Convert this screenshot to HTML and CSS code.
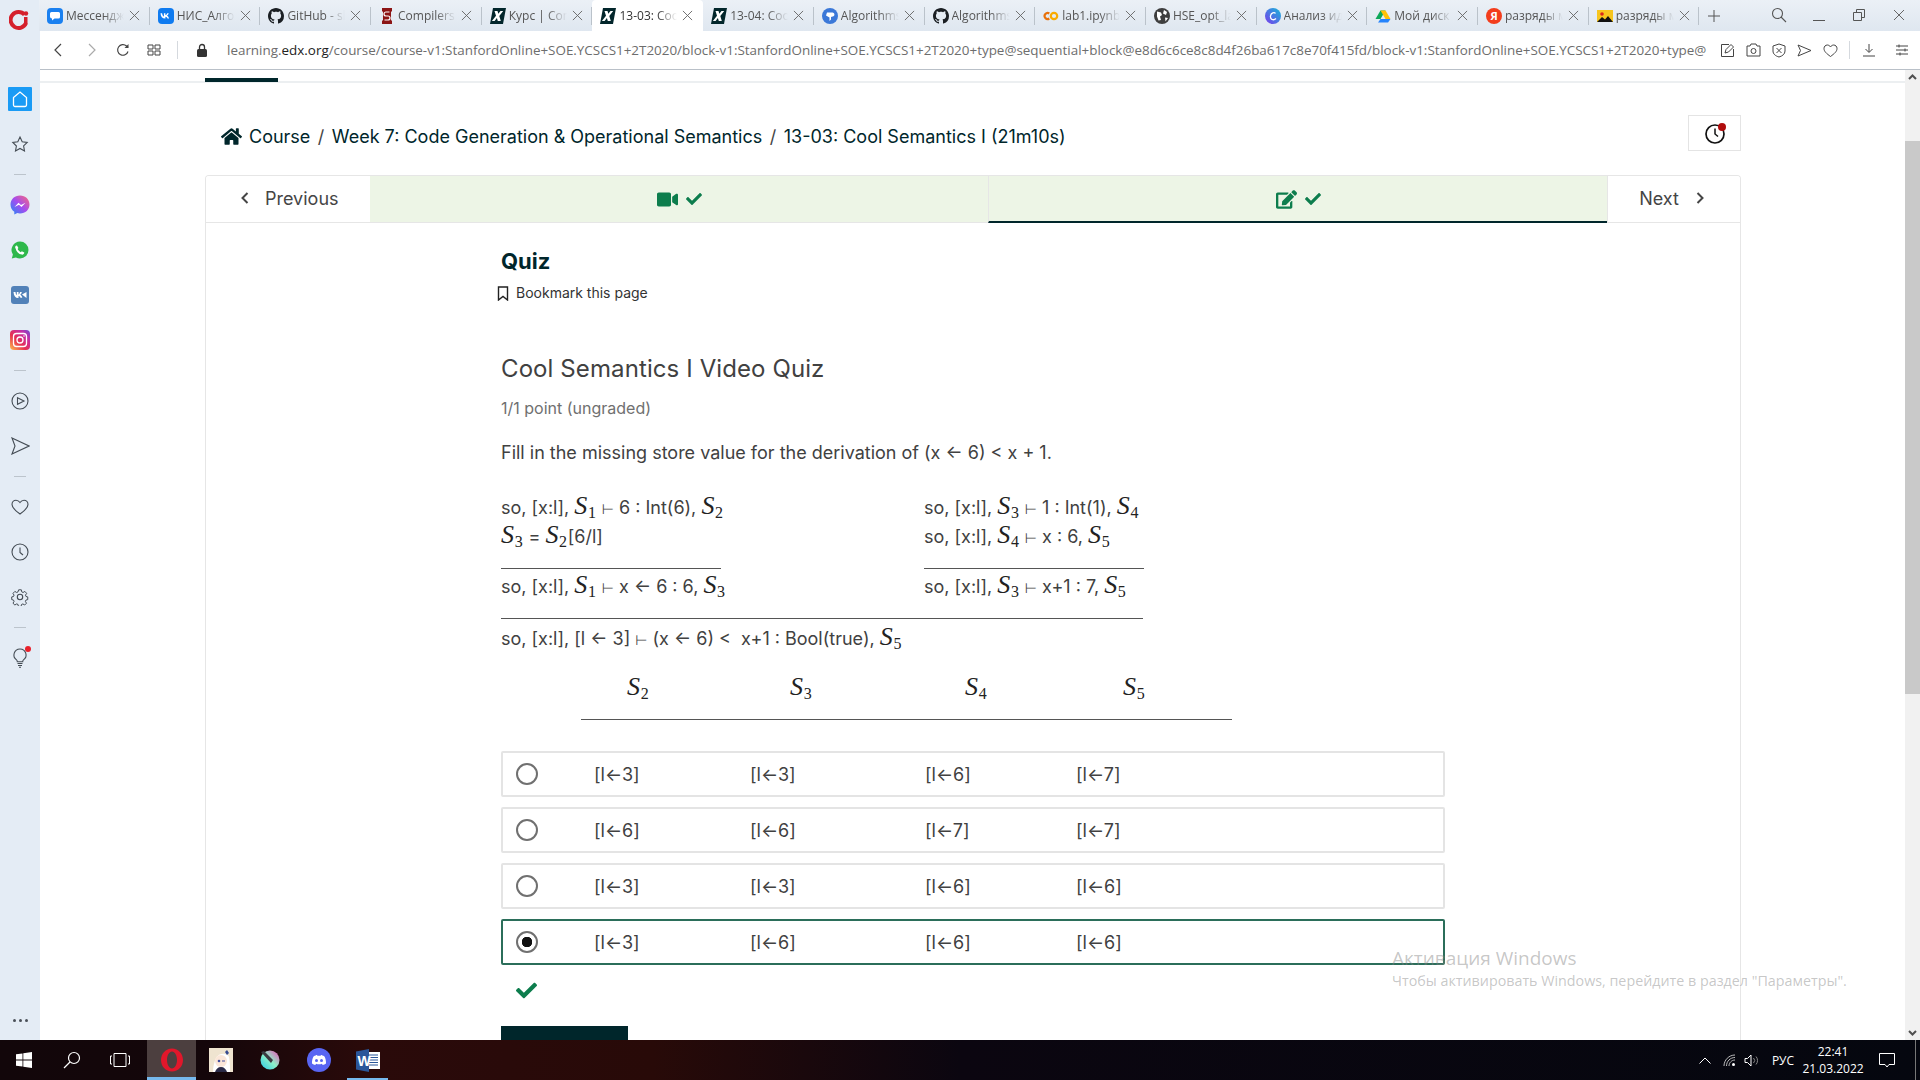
FILE: index.html
```html
<!DOCTYPE html>
<html lang="ru">
<head>
<meta charset="utf-8">
<title>13-03: Cool Semantics I</title>
<link rel="stylesheet" href="styles.css">
</head>
<body>
<svg class="sprite" xmlns="http://www.w3.org/2000/svg">
  <symbol id="i-x" viewBox="0 0 12 12"><path d="M1 1l10 10M11 1L1 11" fill="none" stroke="#666" stroke-width="1"/></symbol>
  <symbol id="i-gh" viewBox="0 0 16 16"><path fill="#1b1f23" d="M8 0C3.58 0 0 3.58 0 8c0 3.54 2.29 6.53 5.47 7.59.4.07.55-.17.55-.38 0-.19-.01-.82-.01-1.49-2.01.37-2.53-.49-2.69-.94-.09-.23-.48-.94-.82-1.13-.28-.15-.68-.52-.01-.53.63-.01 1.08.58 1.23.82.72 1.21 1.87.87 2.33.66.07-.52.28-.87.51-1.07-1.78-.2-3.64-.89-3.64-3.95 0-.87.31-1.59.82-2.15-.08-.2-.36-1.02.08-2.12 0 0 .67-.21 2.2.82.64-.18 1.32-.27 2-.27.68 0 1.36.09 2 .27 1.53-1.04 2.2-.82 2.2-.82.44 1.1.16 1.92.08 2.12.51.56.82 1.27.82 2.15 0 3.07-1.87 3.75-3.65 3.95.29.25.54.73.54 1.48 0 1.07-.01 1.93-.01 2.2 0 .21.15.46.55.38A8.013 8.013 0 0016 8c0-4.42-3.58-8-8-8z"/></symbol>
  <symbol id="i-edx" viewBox="0 0 16 16"><path fill="#02262b" d="M3 0h13l-3 16H0z"/><path fill="#fff" d="M4.500 3h3l.8 2.800L10.500 3h2.700L9.300 8l1.500 5H7.800l-.9-3-2.300 3H1.900L6 7.800z"/></symbol>
  <symbol id="i-vk" viewBox="0 0 16 16"><rect width="16" height="16" rx="4" fill="#0f7bf0"/><path d="M2.500 5.200h1.600c.2 2 1 3 1.800 3.200V5.200h1.500v1.900c.8-.1 1.500-1 1.800-1.900h1.500c-.2 1.200-1.100 2.100-1.700 2.500.6.300 1.700 1.100 2.100 2.800H9.500c-.3-1-1-1.700-2.100-1.800v1.800h-.3C4.300 10.500 2.700 8.500 2.500 5.200z" fill="#fff"/></symbol>
  <symbol id="i-check" viewBox="0 0 512 512"><path d="M173.898 439.404l-166.4-166.4c-9.997-9.997-9.997-26.206 0-36.204l36.203-36.204c9.997-9.998 26.207-9.998 36.204 0L192 312.69 432.095 72.596c9.997-9.997 26.207-9.997 36.204 0l36.203 36.204c9.997 9.997 9.997 26.206 0 36.204l-294.4 294.401c-9.998 9.997-26.207 9.997-36.204-.001z"/></symbol>
  <symbol id="i-home" viewBox="0 0 576 512"><path d="M280.37 148.26L96 300.11V464a16 16 0 0 0 16 16l112.06-.29a16 16 0 0 0 15.92-16V368a16 16 0 0 1 16-16h64a16 16 0 0 1 16 16v95.64a16 16 0 0 0 16 16.05L464 480a16 16 0 0 0 16-16V300L295.67 148.26a12.19 12.19 0 0 0-15.3 0zM571.6 251.47L488 182.56V44.05a12 12 0 0 0-12-12h-56a12 12 0 0 0-12 12v72.61L318.47 43a48 48 0 0 0-61 0L4.34 251.47a12 12 0 0 0-1.6 16.9l25.5 31A12 12 0 0 0 45.15 301l235.22-193.74a12.19 12.19 0 0 1 15.3 0L530.9 301a12 12 0 0 0 16.9-1.6l25.5-31a12 12 0 0 0-1.7-16.93z"/></symbol>
  <symbol id="i-video" viewBox="0 0 576 512"><path d="M336.2 64H47.8C21.4 64 0 85.4 0 111.8v288.4C0 426.6 21.4 448 47.8 448h288.4c26.4 0 47.8-21.4 47.8-47.8V111.8c0-26.4-21.4-47.8-47.8-47.8zm189.4 37.7L416 177.3v157.4l109.6 75.5c21.2 14.6 50.4-.3 50.4-25.8V127.5c0-25.4-29.1-40.4-50.4-25.8z"/></symbol>
  <symbol id="i-edit" viewBox="0 0 576 512"><path d="M402.6 83.2l90.2 90.2c3.8 3.8 3.8 10 0 13.8L274.4 405.6l-92.8 10.3c-12.4 1.4-22.9-9.1-21.5-21.5l10.3-92.8L388.8 83.2c3.8-3.8 10-3.8 13.8 0zm162-22.9l-48.8-48.8c-15.2-15.2-39.9-15.2-55.2 0l-35.4 35.4c-3.8 3.8-3.8 10 0 13.8l90.2 90.2c3.8 3.8 10 3.8 13.8 0l35.4-35.4c15.2-15.3 15.2-40 0-55.2zM384 346.2V448H64V128h229.8c3.2 0 6.2-1.3 8.5-3.5l40-40c7.6-7.6 2.2-20.5-8.5-20.5H48C21.5 64 0 85.5 0 112v352c0 26.5 21.5 48 48 48h352c26.5 0 48-21.5 48-48V306.2c0-10.7-12.9-16-20.5-8.5l-40 40c-2.2 2.3-3.5 5.3-3.5 8.5z"/></symbol>
  <symbol id="i-img" viewBox="0 0 16 16"><rect y="2" width="16" height="12" fill="#f7c51e"/><circle cx="5" cy="6" r="1.800" fill="#d9261c"/><path d="M0 14l5-5 3 2.500 3-3.500 5 6z" fill="#111"/></symbol>
</svg>

<div class="window">
  <aside class="sidebar">
    <div class="logo">
      <svg width="22" height="22" viewBox="0 0 22 22"><path d="M15.500 5.600A8 8 0 1 0 17 14" fill="none" stroke="#d5202c" stroke-width="4"/><path d="M15 8h3.500v7H15z" fill="#d5202c"/><circle cx="17" cy="4.500" r="2.200" fill="#d5202c"/></svg>
    </div>
    <div class="side-items">
      <div class="side-item"><span class="side-home"><svg width="18" height="18" viewBox="0 0 18 18"><path d="M2.500 7.500L9 2l6.500 5.500V15a1.500 1.500 0 0 1-1.500 1.500H4A1.500 1.500 0 0 1 2.500 15z" fill="none" stroke="#fff" stroke-width="1.300"/></svg></span></div>
      <div class="side-item"><svg width="18" height="18" viewBox="0 0 18 18"><path d="M9 2l2.200 4.700 5 .7-3.600 3.500.9 5L9 13.500 4.500 16l.9-5L1.800 7.400l5-.7z" class="ln"/></svg></div>
      <div class="side-sep"></div>
      <div class="side-item"><svg width="20" height="20" viewBox="0 0 20 20"><defs><linearGradient id="ms" x1="0" y1="1" x2="1" y2="0"><stop offset="0" stop-color="#1e8df5"/><stop offset=".5" stop-color="#a44cf0"/><stop offset="1" stop-color="#fb6a78"/></linearGradient></defs><path d="M10 0.500c5.500 0 9.500 3.900 9.500 9s-4 9-9.500 9c-1 0-1.900-.1-2.700-.4l-3 1.500V16.800C2 15.200.5 12.600.5 9.500c0-5.100 4-9 9.500-9z" fill="url(#ms)"/><path d="M4.500 12l4-4.300 2.500 2.200 4.500-2.200-4 4.300-2.500-2.200z" fill="#fff"/></svg></div>
      <div class="side-item"><svg width="18" height="18" viewBox="0 0 18 18"><path d="M9 .5a8.500 8.500 0 0 1 0 17c-1.500 0-2.900-.4-4.100-1L.8 17.500l1.100-3.900A8.500 8.500 0 0 1 9 .5z" fill="#2eb84b"/><path d="M6 4.500l1.400 2.600-.8 1c.7 1.400 1.700 2.400 3.200 3.100l1-.9 2.500 1.300c-.2 1.600-1.200 2.200-2.600 2-3-.5-5.500-3-6-5.900C3.500 6 4.400 4.700 6 4.500z" fill="#fff"/></svg></div>
      <div class="side-item"><svg width="18" height="18" viewBox="0 0 18 18"><rect width="18" height="18" rx="3" fill="#5181b8"/><path d="M2.500 6h2c.2 1.900.8 2.800 1.300 3V6h1.700v2.400c.6-.1 1.200-1.100 1.500-2.400h1.800c-.2 1.300-1 2.300-1.600 2.800.7.300 1.700 1.100 2.100 3H9.400c-.3-1-.9-1.600-1.900-1.800V12h-.4C4.500 12 2.800 10 2.500 6z" fill="#fff"/><path d="M11 8.500L15.500 6v6z" fill="#fff"/></svg></div>
      <div class="side-item"><svg width="20" height="20" viewBox="0 0 20 20"><defs><linearGradient id="ig" x1="0" y1="1" x2="1" y2="0"><stop offset="0" stop-color="#fdc14b"/><stop offset=".4" stop-color="#e8304f"/><stop offset=".75" stop-color="#c42ea8"/><stop offset="1" stop-color="#6a50d0"/></linearGradient></defs><rect width="20" height="20" rx="4" fill="url(#ig)"/><rect x="3.500" y="3.500" width="13" height="13" rx="3" fill="none" stroke="#fff" stroke-width="1.300"/><circle cx="10" cy="10" r="3" fill="none" stroke="#fff" stroke-width="1.300"/><circle cx="14" cy="6" r=".8" fill="#fff"/></svg></div>
      <div class="side-sep"></div>
      <div class="side-item"><svg width="18" height="18" viewBox="0 0 18 18"><circle cx="9" cy="9" r="8" class="ln"/><path d="M6.500 5.700L13 9l-6.500 3.300z" class="ln"/></svg></div>
      <div class="side-item"><svg width="19" height="18" viewBox="0 0 19 18"><path d="M1 1l17 8-17 8 3-8z" class="ln"/></svg></div>
      <div class="side-sep"></div>
      <div class="side-item"><svg width="18" height="16" viewBox="0 0 18 16"><path d="M9 15C4 11.500 1 9 1 5.500 1 3 2.800 1.200 5 1.200c1.700 0 3 .9 4 2.300 1-1.400 2.300-2.300 4-2.300 2.200 0 4 1.800 4 4.300C17 9 14 11.500 9 15z" class="ln"/></svg></div>
      <div class="side-item"><svg width="18" height="18" viewBox="0 0 18 18"><circle cx="9" cy="9" r="8" class="ln"/><path d="M9 4.500V9.500l3 2.500" class="ln"/></svg></div>
      <div class="side-item"><svg width="18" height="18" viewBox="0 0 18 18"><circle cx="9" cy="9" r="2.700" class="ln"/><path d="M7.500 1h3l.4 2.300 1.500.7 2-1.200 2 2.200-1.300 1.900.5 1.500 2 .5v3l-2 .5-.6 1.500 1.200 2-2 2-2-1.200-1.500.6-.5 2.200h-3l-.4-2.200-1.500-.6-2 1.200-2.100-2 1.200-2-.6-1.500-2-.5v-3l2-.5.6-1.500-1.200-1.900 2.100-2.200 2 1.200 1.500-.7z" class="ln" transform="scale(.9) translate(1 1)"/></svg></div>
      <div class="side-sep"></div>
      <div class="side-item"><span class="bulb"><svg width="16" height="20" viewBox="0 0 16 20"><path d="M8 1a6 6 0 0 0-3.500 10.900c.6.500.8 1 .8 1.800h5.400c0-.8.200-1.300.8-1.800A6 6 0 0 0 8 1zM5.500 15.500h5M6 17.500h4M7 19.300h2" class="ln"/></svg><span class="bulb-dot"></span></span></div>
    </div>
    <div class="side-more"><span></span><span></span><span></span></div>
  </aside>

  <main class="browser">
    <div class="tabstrip">
      <div class="tab"><span class="fav"><svg width="16" height="16" viewBox="0 0 16 16"><rect width="16" height="16" rx="4" fill="#1a80f0"/><path d="M3 5.500A1.500 1.500 0 0 1 4.500 4h7A1.500 1.500 0 0 1 13 5.500v3.500a1.500 1.500 0 0 1-1.500 1.500H7.500l-2.500 2v-2a2 2 0 0 1-2-2z" fill="#fff"/></svg></span><span class="tab-title">Мессенджеры</span><svg class="tab-x"><use href="#i-x"/></svg></div>
      <div class="tab"><span class="fav"><svg width="16" height="16"><use href="#i-vk"/></svg></span><span class="tab-title">НИС_Алгоритмы</span><svg class="tab-x"><use href="#i-x"/></svg></div>
      <div class="tab"><span class="fav"><svg width="16" height="16"><use href="#i-gh"/></svg></span><span class="tab-title">GitHub - slesar</span><svg class="tab-x"><use href="#i-x"/></svg></div>
      <div class="tab"><span class="fav"><svg width="16" height="16" viewBox="0 0 16 16"><path d="M3 0h10v3l-1 1v8l1 1v3H3v-3l1-1V4L3 3z" fill="#8c1515"/><path d="M10.500 4H7a1.500 1.500 0 0 0 0 4h2a1.500 1.500 0 0 1 0 4H5.500" fill="none" stroke="#fff" stroke-width="1.200"/></svg></span><span class="tab-title">Compilers | Course</span><svg class="tab-x"><use href="#i-x"/></svg></div>
      <div class="tab"><span class="fav"><svg width="16" height="16"><use href="#i-edx"/></svg></span><span class="tab-title">Курс | Compilers</span><svg class="tab-x"><use href="#i-x"/></svg></div>
      <div class="tab tab-active"><span class="fav"><svg width="16" height="16"><use href="#i-edx"/></svg></span><span class="tab-title">13-03: Cool Semantics</span><svg class="tab-x"><use href="#i-x"/></svg></div>
      <div class="tab"><span class="fav"><svg width="16" height="16"><use href="#i-edx"/></svg></span><span class="tab-title">13-04: Cool Semantics</span><svg class="tab-x"><use href="#i-x"/></svg></div>
      <div class="tab"><span class="fav"><svg width="16" height="16" viewBox="0 0 16 16"><circle cx="8" cy="8" r="8" fill="#3b78d8"/><path d="M5 4.500h5.500a2 2 0 0 1 1 3.700L9 9v2.500L7.500 13V9.500L4 7.500z" fill="#fff"/></svg></span><span class="tab-title">Algorithms and</span><svg class="tab-x"><use href="#i-x"/></svg></div>
      <div class="tab"><span class="fav"><svg width="16" height="16"><use href="#i-gh"/></svg></span><span class="tab-title">Algorithms and</span><svg class="tab-x"><use href="#i-x"/></svg></div>
      <div class="tab"><span class="fav"><svg width="16" height="16" viewBox="0 0 16 16"><path d="M6.300 5.500a3 3 0 1 0 0 5" fill="none" stroke="#e8710a" stroke-width="2.200"/><circle cx="11" cy="8" r="3.200" fill="none" stroke="#f9ab00" stroke-width="2.200"/></svg></span><span class="tab-title">lab1.ipynb - Colab</span><svg class="tab-x"><use href="#i-x"/></svg></div>
      <div class="tab"><span class="fav"><svg width="16" height="16" viewBox="0 0 16 16"><circle cx="8" cy="8" r="8" fill="#3e3e3e"/><path d="M3 3.500l4 1 1 2.500-2 1.500 1 3.500-2.500.5L3 8.500zM10 2l3 2-1 3-3-1.500zM11 9.500l3 .5-2.500 3.500z" fill="#fff"/></svg></span><span class="tab-title">HSE_opt_labs</span><svg class="tab-x"><use href="#i-x"/></svg></div>
      <div class="tab"><span class="fav"><svg width="16" height="16" viewBox="0 0 16 16"><defs><linearGradient id="cv" x1="0" y1="1" x2="1" y2="0"><stop offset="0" stop-color="#7c3aed"/><stop offset="1" stop-color="#15b8d8"/></linearGradient></defs><circle cx="8" cy="8" r="8" fill="url(#cv)"/><path d="M10.500 5.500C9.500 3.800 6 4.500 5.500 8s3 5 5.500 2.500" fill="none" stroke="#fff" stroke-width="1.300"/></svg></span><span class="tab-title">Анализ идей</span><svg class="tab-x"><use href="#i-x"/></svg></div>
      <div class="tab"><span class="fav"><svg width="16" height="16" viewBox="0 0 16 16"><path d="M5.500 1.500h5L5.500 10H.500z" fill="#0ea85a" transform="translate(0 1)"/><path d="M10.500 2.500l5 8.500h-5L5.500 2.500z" fill="#ffc107"/><path d="M3 14.500l2.500-3.500h10L13 14.500z" fill="#2684fc"/></svg></span><span class="tab-title">Мой диск - Google</span><svg class="tab-x"><use href="#i-x"/></svg></div>
      <div class="tab"><span class="fav fav-ya">Я</span><span class="tab-title">разряды машины</span><svg class="tab-x"><use href="#i-x"/></svg></div>
      <div class="tab"><span class="fav"><svg width="16" height="16"><use href="#i-img"/></svg></span><span class="tab-title">разряды машины</span><svg class="tab-x"><use href="#i-x"/></svg></div>
      <div class="tab-plus"><svg width="12" height="12" viewBox="0 0 12 12"><path d="M6 0v12M0 6h12" stroke="#555" fill="none"/></svg></div>
      <div class="win-controls">
        <svg class="wc-search" width="16" height="16" viewBox="0 0 16 16"><circle cx="6.500" cy="6.500" r="5" fill="none" stroke="#555" stroke-width="1.100"/><path d="M10 10l5 5" stroke="#555" stroke-width="1.100"/></svg>
        <svg width="12" height="12" viewBox="0 0 12 12"><path d="M0 11.500h12" stroke="#555"/></svg>
        <svg width="12" height="12" viewBox="0 0 12 12"><path d="M.5 3.500h8v8h-8zM3.500 3.500v-3h8v8h-3" fill="none" stroke="#555"/></svg>
        <svg width="12" height="12"><use href="#i-x"/></svg>
      </div>
    </div>

    <div class="addressbar">
      <svg class="ab-back" width="10" height="14" viewBox="0 0 10 14"><path d="M8 1L2 7l6 6" fill="none" stroke="#444" stroke-width="1.200"/></svg>
      <svg class="ab-fwd" width="10" height="14" viewBox="0 0 10 14"><path d="M2 1l6 6-6 6" fill="none" stroke="#aaa" stroke-width="1.200"/></svg>
      <svg class="ab-reload" width="14" height="14" viewBox="0 0 14 14"><path d="M12 8.500A5.300 5.300 0 1 1 10.500 3L12 4.500" fill="none" stroke="#444" stroke-width="1.200"/><path d="M12.500 1v4h-4z" fill="#444"/></svg>
      <svg class="ab-grid" width="14" height="12" viewBox="0 0 14 12"><path d="M1 1h5v4H1zM8 1h5v4H8zM1 7h5v4H1zM8 7h5v4H8z" fill="none" stroke="#444"/></svg>
      <span class="ab-sep"></span>
      <svg class="ab-lock" width="10" height="14" viewBox="0 0 10 14"><path d="M2.500 6V4a2.500 2.500 0 0 1 5 0v2" fill="none" stroke="#333" stroke-width="1.300"/><rect y="6" width="10" height="8" rx="1.500" fill="#333"/></svg>
      <div class="url"><span>learning.</span><b>edx.org</b><span>/course/course-v1:StanfordOnline+SOE.YCSCS1+2T2020/block-v1:StanfordOnline+SOE.YCSCS1+2T2020+type@sequential+block@e8d6c6ce8c8d4f26ba617c8e70f415fd/block-v1:StanfordOnline+SOE.YCSCS1+2T2020+type@</span></div>
      <div class="ab-tools">
        <svg width="15" height="15" viewBox="0 0 15 15"><path d="M9 1.500H1.500v12h12V6" fill="none" stroke="#444"/><path d="M5 10l1-3.500L11 1.500 13.500 4l-5 5z" fill="none" stroke="#444"/></svg>
        <svg width="15" height="14" viewBox="0 0 15 14"><path d="M1 3h3l1-2h5l1 2h3v10H1z" fill="none" stroke="#444"/><circle cx="7.500" cy="8" r="2.500" fill="none" stroke="#444"/></svg>
        <svg width="14" height="15" viewBox="0 0 14 15"><path d="M7 1l6 2v5c0 3-2.500 5-6 6-3.500-1-6-3-6-6V3z" fill="none" stroke="#444"/><path d="M4.500 5l5 5M9.500 5l-5 5" stroke="#444"/></svg>
        <svg width="15" height="13" viewBox="0 0 15 13"><path d="M1 1l13 5.500L1 12l2.500-5.500z" fill="none" stroke="#444"/></svg>
        <svg width="15" height="13" viewBox="0 0 15 13"><path d="M7.500 12.500C3.500 9.500 1 7.500 1 4.500 1 2.500 2.500 1 4.300 1c1.300 0 2.400.7 3.200 1.900C8.300 1.700 9.400 1 10.700 1 12.500 1 14 2.500 14 4.500c0 3-2.500 5-6.500 8z" fill="none" stroke="#444"/></svg>
        <span class="ab-sep2"></span>
        <svg class="ab-dl" width="14" height="14" viewBox="0 0 14 14"><path d="M7 1v8M3.500 6L7 9.500 10.500 6M1 13h12" fill="none" stroke="#444"/></svg>
        <svg class="ab-menu" width="14" height="12" viewBox="0 0 14 12"><path d="M1 2h12M1 6h12M1 10h12M4 0.500v3M10 4.500v3M5 8.500v3" fill="none" stroke="#444"/></svg>
      </div>
    </div>

    <div class="viewport">
      <div class="page">
        <div class="course-nav"><span class="course-nav-active"></span></div>
        <div class="wrap">
          <div class="crumb-row">
            <nav class="crumbs">
              <svg class="home-icon"><use href="#i-home"/></svg>
              <span>Course</span><span class="slash">/</span><span>Week 7: Code Generation &amp; Operational Semantics</span><span class="slash">/</span><span>13-03: Cool Semantics I (21m10s)</span>
            </nav>
            <div class="clock-btn"><svg width="22" height="22" viewBox="0 0 22 22"><circle cx="11" cy="12" r="9" fill="none" stroke="#111" stroke-width="1.700"/><path d="M11 6.500V12l3 2.500" fill="none" stroke="#111" stroke-width="1.500"/><circle cx="18" cy="5" r="4" fill="#b00d0d"/></svg></div>
          </div>

          <section class="card">
            <div class="seq-tabs">
              <div class="seq-nav seq-prev"><svg width="10" height="14" viewBox="0 0 10 14"><path d="M7.500 2L2.500 7l5 5" fill="none" stroke="#454545" stroke-width="2"/></svg><span>Previous</span></div>
              <div class="seq-unit"><svg class="seq-ic"><use href="#i-video"/></svg><svg class="seq-ck"><use href="#i-check"/></svg></div>
              <div class="seq-unit seq-current"><svg class="seq-ic"><use href="#i-edit"/></svg><svg class="seq-ck"><use href="#i-check"/></svg></div>
              <div class="seq-nav seq-next"><span>Next</span><svg width="10" height="14" viewBox="0 0 10 14"><path d="M2.500 2l5 5-5 5" fill="none" stroke="#454545" stroke-width="2"/></svg></div>
            </div>

            <div class="unit">
              <h1 class="unit-title">Quiz</h1>
              <div class="bookmark"><svg width="12" height="15" viewBox="0 0 12 15"><path d="M1.500 1h9v13L6 10.500 1.500 14z" fill="none" stroke="#222" stroke-width="1.400"/></svg><span>Bookmark this page</span></div>
              <h2 class="problem-title">Cool Semantics I Video Quiz</h2>
              <div class="points">1/1 point (ungraded)</div>
              <p class="prompt">Fill in the missing store value for the derivation of (x ← 6) &lt; x + 1.</p>

              <div class="deriv">
                <div class="deriv-col">
                  <div class="ml">so, [x:l], <i class="s">S<sub>1</sub></i> <span class="ts">⊢</span> 6 : Int(6), <i class="s">S<sub>2</sub></i></div>
                  <div class="ml"><i class="s">S<sub>3</sub></i> = <i class="s">S<sub>2</sub></i>[6/l]</div>
                  <div class="rule-short"></div>
                  <div class="ml">so, [x:l], <i class="s">S<sub>1</sub></i> <span class="ts">⊢</span> x ← 6 : 6, <i class="s">S<sub>3</sub></i></div>
                </div>
                <div class="deriv-col">
                  <div class="ml">so, [x:l], <i class="s">S<sub>3</sub></i> <span class="ts">⊢</span> 1 : Int(1), <i class="s">S<sub>4</sub></i></div>
                  <div class="ml">so, [x:l], <i class="s">S<sub>4</sub></i> <span class="ts">⊢</span> x : 6, <i class="s">S<sub>5</sub></i></div>
                  <div class="rule-short"></div>
                  <div class="ml">so, [x:l], <i class="s">S<sub>3</sub></i> <span class="ts">⊢</span> x+1 : 7, <i class="s">S<sub>5</sub></i></div>
                </div>
              </div>
              <div class="rule-long"></div>
              <div class="ml ml-last">so, [x:l], [l ← 3] <span class="ts">⊢</span> (x ← 6) &lt;&nbsp; x+1 : Bool(true), <i class="s">S<sub>5</sub></i></div>

              <div class="s-head"><i class="s">S<sub>2</sub></i><i class="s">S<sub>3</sub></i><i class="s">S<sub>4</sub></i><i class="s">S<sub>5</sub></i></div>
              <div class="rule-head"></div>

              <div class="options">
                <label class="option"><span class="radio"></span><span>[l←3]</span><span>[l←3]</span><span>[l←6]</span><span>[l←7]</span></label>
                <label class="option"><span class="radio"></span><span>[l←6]</span><span>[l←6]</span><span>[l←7]</span><span>[l←7]</span></label>
                <label class="option"><span class="radio"></span><span>[l←3]</span><span>[l←3]</span><span>[l←6]</span><span>[l←6]</span></label>
                <label class="option option-on"><span class="radio radio-on"></span><span>[l←3]</span><span>[l←6]</span><span>[l←6]</span><span>[l←6]</span></label>
              </div>
              <svg class="result-check"><use href="#i-check"/></svg>
              <div class="submit"></div>
            </div>
          </section>
        </div>
      </div>
      <div class="scrollbar">
        <svg class="sb-arrow" width="15" height="14" viewBox="0 0 15 14"><path d="M4 9l3.500-3.500L11 9" fill="none" stroke="#505050" stroke-width="2"/></svg>
        <div class="sb-gap"></div>
        <div class="sb-thumb"></div>
        <div class="sb-rest"></div>
        <svg class="sb-arrow" width="15" height="14" viewBox="0 0 15 14"><path d="M4 5l3.500 3.500L11 5" fill="none" stroke="#505050" stroke-width="2"/></svg>
      </div>
    </div>
  </main>
</div>

<footer class="taskbar">
  <div class="tb-btn"><svg width="16" height="16" viewBox="0 0 16 16"><path d="M0 2.300l6.500-.9v6.200H0zM7.300 1.300L16 0v7.600H7.300zM0 8.400h6.500v6.200L0 13.700zM7.300 8.400H16V16l-8.700-1.200z" fill="#fff"/></svg></div>
  <div class="tb-btn"><svg width="18" height="18" viewBox="0 0 18 18"><circle cx="11" cy="7" r="5.500" fill="none" stroke="#fff" stroke-width="1.200"/><path d="M7 11l-6 6" stroke="#fff" stroke-width="1.300"/></svg></div>
  <div class="tb-btn tb-last"><svg width="20" height="14" viewBox="0 0 20 14"><path d="M4 .5h12v13H4zM2 3H.500v8H2M18 3h1.500v8H18" fill="none" stroke="#fff"/></svg></div>
  <div class="tb-app tb-active"><svg width="24" height="24" viewBox="0 0 24 24"><path fill-rule="evenodd" d="M12 .5c6.400 0 11 5.200 11 11.500S18.400 23.500 12 23.500 1 18.300 1 12 5.600.5 12 .5zM12 3.500c-2.800 0-5 3.800-5 8.500s2.200 8.500 5 8.500 5-3.800 5-8.500-2.200-8.500-5-8.500z" fill="#e0172b"/></svg></div>
  <div class="tb-app"><svg width="24" height="24" viewBox="0 0 24 24"><rect width="24" height="24" fill="#efe4d0"/><path d="M4 24c0-5 1-9 3-14 3-5 10-6 13-1 1 5 1 10 1 15z" fill="#fff"/><path d="M6 24c1-3 3-5 6-5s5 2 6 5z" fill="#2b2b48"/><ellipse cx="12" cy="13" rx="6" ry="6" fill="#fbe6d8"/><circle cx="10" cy="13" r="1.300" fill="#4450a0"/><path d="M13 13h3" stroke="#4450a0"/><path d="M16 4l2-2 2 3-2 2z" fill="#354a90"/></svg></div>
  <div class="tb-app"><svg width="20" height="20" viewBox="0 0 20 20"><defs><linearGradient id="kr" x1="0" y1="1" x2="1" y2="0"><stop offset="0" stop-color="#25c9e8"/><stop offset=".5" stop-color="#8df0c8"/><stop offset="1" stop-color="#f04ab8"/></linearGradient></defs><circle cx="10" cy="10" r="9.500" fill="url(#kr)"/><path d="M1 2l3-1 9 9-2 3z" fill="#3a3a42"/></svg></div>
  <div class="tb-app"><svg width="24" height="24" viewBox="0 0 24 24"><circle cx="12" cy="12" r="12" fill="#5865f2"/><path d="M6.500 8.500C8 7.500 9.500 7 10 7l.4.800h3.200L14 7c.5 0 2 .5 3.500 1.500 1 2 1.700 4.500 1.500 7-1 .8-2.300 1.400-3.300 1.500l-.8-1.300-1.400.5h-3l-1.400-.5-.8 1.300c-1-.1-2.300-.7-3.300-1.500-.2-2.500.5-5 1.500-7z" fill="#fff"/><circle cx="9.500" cy="12.500" r="1.500" fill="#5865f2"/><circle cx="14.500" cy="12.500" r="1.500" fill="#5865f2"/></svg></div>
  <div class="tb-app tb-open"><span class="word"><svg width="24" height="23" viewBox="0 0 24 23"><path d="M9 3h15v17H9z" fill="#fff"/><path d="M13 6h9M13 8.500h9M13 11h9M13 13.500h9M13 16h9" stroke="#2b579a"/><path d="M0 2.500L13 0v23L0 20.500z" fill="#2b579a"/></svg><span class="word-w">W</span></span></div>

  <div class="tray">
    <div class="tr tr-chev"><svg width="12" height="7" viewBox="0 0 12 7"><path d="M.5 6.500L6 1l5.500 5.500" fill="none" stroke="#fff"/></svg></div>
    <div class="tr tr-wifi"><svg width="13" height="13" viewBox="0 0 13 13"><path d="M1 12C1 6 6 1 12 1M3.500 12c0-4.700 3.800-8.500 8.500-8.500M6 12c0-3.300 2.700-6 6-6" fill="none" stroke="#bbb"/><circle cx="10.500" cy="10.500" r="1.500" fill="#fff"/></svg></div>
    <div class="tr tr-vol"><svg width="16" height="13" viewBox="0 0 16 13"><path d="M1 4.500h2.500L7 1v11L3.500 8.500H1z" fill="none" stroke="#fff"/><path d="M9.500 4a3.500 3.500 0 0 1 0 5M12 2.500a6 6 0 0 1 0 8" fill="none" stroke="#888"/></svg></div>
    <div class="tr tr-lang">РУС</div>
    <div class="tr tr-clock"><span>22:41</span><span>21.03.2022</span></div>
    <div class="tr tr-note"><svg width="16" height="15" viewBox="0 0 16 15"><path d="M.5.5h15v11H10l-2 2.500-2-2.500H.5z" fill="none" stroke="#fff"/></svg></div>
    <div class="tr tr-end"></div>
  </div>
</footer>

<div class="watermark">
  <div class="wm-title">Активация Windows</div>
  <div class="wm-sub">Чтобы активировать Windows, перейдите в раздел "Параметры".</div>
</div>
</body>
</html>
```

FILE: styles.css
```css
* { box-sizing: border-box; }
html, body { margin: 0; padding: 0; }
body {
  width: 1920px;
  height: 1080px;
  overflow: hidden;
  position: relative;
  display: flex;
  flex-direction: column;
  font-family: Inter, "Noto Sans", sans-serif;
  color: #414141;
  background: #fff;
}
.sprite { display: none; }
svg { display: block; flex: none; }

.window { display: flex; height: 1040px; }

/* Sidebar */
.sidebar {
  width: 40px;
  flex: none;
  background: #e4ecf5;
  display: flex;
  flex-direction: column;
  align-items: center;
}
.logo { height: 40px; padding-top: 9px; }
.side-items { margin-top: 36px; display: flex; flex-direction: column; align-items: center; width: 100%; }
.side-item { height: 45px; display: flex; align-items: center; justify-content: center; }
.side-home {
  width: 24px; height: 24px;
  background: #1a9bf5;
  display: flex; align-items: center; justify-content: center;
  border-radius: 1px;
}
.ln { fill: none; stroke: #444c54; stroke-width: 1.1; }
.side-sep { width: 12px; height: 1px; background: #bcc4cc; margin: 8px 0 7px; flex: none; }
.bulb { position: relative; display: block; }
.bulb-dot { position: absolute; top: -2px; right: -3px; width: 6px; height: 6px; border-radius: 50%; background: #e8212b; }
.side-more { margin-top: auto; margin-bottom: 18px; display: flex; gap: 3px; }
.side-more span { width: 3px; height: 3px; border-radius: 50%; background: #4a5058; }

/* Browser chrome */
.browser { flex: 1; min-width: 0; display: flex; flex-direction: column; }
.tabstrip {
  height: 31px;
  flex: none;
  display: flex;
  background: linear-gradient(#ebf0f6, #dfe7f0);
  margin-left: -1px;
}
.tab {
  width: 110.7px;
  flex: none;
  display: flex;
  align-items: center;
  padding-left: 8px;
  position: relative;
  font-family: "Open Sans", "Noto Sans", sans-serif;
  font-size: 12px;
  color: #555;
}
.tab::after { content: ""; position: absolute; right: 0; top: 7px; height: 18px; width: 1px; background: #bac2ca; }
.tab-active { background: #fff; color: #333; border-radius: 4px 4px 0 0; }
.tab-active::after { display: none; }
.fav { width: 16px; height: 16px; flex: none; }
.fav-ya {
  background: #f33d1c; color: #fff; border-radius: 50%;
  font: 700 11px/16px "Noto Sans", sans-serif; text-align: center;
}
.tab-title {
  margin-left: 3px;
  width: 58px;
  white-space: nowrap;
  overflow: hidden;
  -webkit-mask-image: linear-gradient(90deg, #000 65%, transparent 100%);
  mask-image: linear-gradient(90deg, #000 65%, transparent 100%);
}
.tab-x { width: 11px; height: 11px; margin-left: 5px; }
.tab-plus { width: 30px; display: flex; align-items: center; padding-left: 9px; }
.win-controls { flex: 1; display: flex; align-items: center; padding-left: 42px; gap: 28px; padding-bottom: 1px; }
.wc-search { margin-right: -2px; }

.addressbar {
  height: 39px;
  flex: none;
  background: #fff;
  border-bottom: 1px solid #b9c0c8;
  display: flex;
  align-items: center;
}
.ab-back { margin-left: 13px; }
.ab-fwd { margin-left: 24px; }
.ab-reload { margin-left: 19px; }
.ab-grid { margin-left: 17px; }
.ab-sep { width: 1px; height: 18px; background: #d5d9de; margin-left: 16px; }
.ab-lock { margin-left: 19px; }
.url {
  margin-left: 20px;
  width: 1480px;
  flex: none;
  overflow: hidden;
  white-space: nowrap;
  font-family: "Open Sans", "Noto Sans", sans-serif;
  font-size: 13.43px;
  color: #6d6d6d;
}
.url b { font-weight: 400; color: #222; }
.ab-tools { display: flex; align-items: center; margin-left: 13px; gap: 11px; }
.ab-sep2 { width: 1px; height: 18px; background: #d5d9de; }
.ab-dl { margin-left: 1px; }
.ab-menu { margin-left: 8px; }

/* Page */
.viewport { flex: 1; min-height: 0; display: flex; }
.page { flex: 1; min-width: 0; display: flex; flex-direction: column; }
.course-nav { height: 13px; flex: none; border-bottom: 2px solid #eceff1; padding-left: 165px; display: flex; align-items: flex-end; }
.course-nav-active { width: 73px; height: 4px; background: #00262b; margin-bottom: -1px; }
.wrap { flex: 1; min-height: 0; margin: 0 164px 0 165px; display: flex; flex-direction: column; }
.crumb-row { display: flex; justify-content: space-between; margin-top: 32px; margin-bottom: 24px; flex: none; }
.crumbs { display: flex; align-items: center; padding: 6px 0 0 16px; font-size: 18px; color: #00262b; height: 36px; }
.home-icon { width: 21px; height: 19px; fill: #00262b; margin-right: 7px; }
.slash { margin: 0 7.5px; color: #454545; }
.clock-btn {
  width: 53px; height: 36px;
  border: 1px solid #e4e4e4;
  display: flex; align-items: center; justify-content: center;
}

.card {
  flex: 1;
  min-height: 0;
  overflow: hidden;
  border: 1px solid #e6e6e6;
  border-bottom: 0;
  border-radius: 4px 4px 0 0;
}
.seq-tabs { display: flex; height: 47px; border-bottom: 1px solid #e6e6e6; }
.seq-nav { display: flex; align-items: center; font-size: 18px; color: #454545; background: #fff; padding-bottom: 2px; }
.seq-prev { width: 164px; padding-left: 34px; gap: 15px; }
.seq-next { width: 133px; border-left: 1px solid #e6e6e6; gap: 16px; justify-content: center; padding-right: 4px; }
.seq-unit {
  flex: 1;
  background: #edf5e6;
  display: flex;
  align-items: center;
  justify-content: center;
  gap: 8px;
  fill: #0d7d4d;
  color: #0d7d4d;
}
.seq-current { border-left: 1px solid #e6e6e6; border-bottom: 2px solid #00262b; margin-bottom: -1px; padding-top: 1px; }
.seq-ic { width: 21px; height: 19px; }
.seq-ck { width: 16px; height: 16px; }

.unit { padding: 24px 0 0 295px; width: 1239px; }
.unit-title { margin: 0; font-size: 22px; line-height: 28px; font-weight: 700; color: #00262b; }
.bookmark { display: flex; align-items: center; margin: 8px 0 0 -4px; font-size: 14px; line-height: 20px; color: #333; gap: 7px; }
.problem-title { margin: 50px 0 0; font-size: 24px; line-height: 32px; font-weight: 400; letter-spacing: .1px; color: #414141; }
.points { margin-top: 11px; font-size: 16px; line-height: 24px; color: #707070; }
.prompt { margin: 20px 0 0; font-size: 18px; line-height: 26px; color: #414141; }

.deriv { display: grid; grid-template-columns: 423px 220px; margin-top: 28px; }
.ml { height: 29px; line-height: 24px; font-size: 18px; white-space: nowrap; color: #414141; }
.s { font-family: "Liberation Serif", serif; font-size: 26px; font-style: italic; color: #222; }
.s sub { font-style: normal; font-size: 16px; line-height: 0; vertical-align: -4px; margin: 0 .7px; }
.ts { font-family: "DejaVu Sans", sans-serif; font-size: 14px; }
.rule-short { width: 220px; height: 1px; background: #555; margin: 16px 0 4px; }
.rule-long { width: 642px; height: 1px; background: #555; margin-top: 16px; }
.ml-last { margin-top: 6px; }
.s-head {
  margin-top: 18px;
  height: 30px;
  line-height: 30px;
  padding-left: 126px;
  display: grid;
  grid-template-columns: 163px 175px 158px auto;
}
.rule-head { margin: 17px 0 31px 80px; width: 651px; height: 1px; background: #555; }

.options { display: flex; flex-direction: column; gap: 10px; width: 944px; }
.option {
  height: 46px;
  border: 2px solid #e4e4e4;
  border-radius: 2px;
  display: grid;
  grid-template-columns: 78px 156px 175px 151px auto;
  align-items: center;
  padding-left: 13px;
  font-size: 18px;
  color: #414141;
}
.option-on { border-color: #2b6e5a; }
.radio { width: 22px; height: 22px; border: 2px solid #707070; border-radius: 50%; display: block; }
.radio-on { background: radial-gradient(circle, #111 0 5px, #fff 5.500px); }
.result-check { width: 21px; height: 21px; fill: #0d7d4d; margin: 15px 0 0 15px; }
.submit { width: 127px; height: 40px; background: #00262b; margin-top: 25px; }

.scrollbar { width: 15px; flex: none; display: flex; flex-direction: column; background: #f1f1f1; }
.sb-arrow { height: 14px; }
.sb-gap { height: 57px; }
.sb-thumb { height: 553px; background: #c9c9c9; }
.sb-rest { flex: 1; background: #f1f1f1; }

/* Taskbar */
.taskbar {
  height: 40px;
  flex: none;
  display: flex;
  color: #fff;
  background: linear-gradient(90deg, #12060a 0, #14060a 11%, #2a0a0a 19%, #280a08 34%, #0b0610 50%, #05070f 100%);
}
.tb-btn { width: 48px; display: flex; align-items: center; justify-content: center; }
.tb-last { margin-right: 3px; }
.tb-app { width: 49px; display: flex; align-items: center; justify-content: center; position: relative; }
.tb-active { background: #4c3f3f; border-bottom: 3px solid #76b9ed; padding-top: 3px; }
.tb-open::after { content: ""; position: absolute; left: 4px; right: 4px; bottom: 0; height: 2px; background: #76b9ed; }
.word { position: relative; display: block; }
.word-w { position: absolute; left: 2px; top: 4px; font: 700 14px/16px "Liberation Sans", sans-serif; color: #fff; }
.tray { margin-left: auto; display: flex; }
.tr { display: flex; align-items: center; justify-content: center; }
.tr-chev { width: 24px; }
.tr-wifi { width: 25px; }
.tr-vol { width: 20px; }
.tr-lang { width: 42px; font: 12px "Open Sans", "Noto Sans", sans-serif; }
.tr-clock { width: 58px; flex-direction: column; font: 12px/17px "Open Sans", "Noto Sans", sans-serif; white-space: nowrap; }
.tr-note { width: 50px; }
.tr-end { width: 8px; position: relative; }
.tr-end::after { content: ""; position: absolute; left: 3px; top: 0; bottom: 0; width: 1px; background: #777; }

/* Windows activation overlay */
.watermark {
  position: absolute;
  left: 1392px;
  top: 945px;
  font-family: "Open Sans", "Noto Sans", sans-serif;
  color: rgba(130, 130, 130, .45);
  white-space: nowrap;
  pointer-events: none;
}
.wm-title { font-size: 19px; line-height: 26px; }
.wm-sub { font-size: 14.3px; line-height: 20px; }
```
